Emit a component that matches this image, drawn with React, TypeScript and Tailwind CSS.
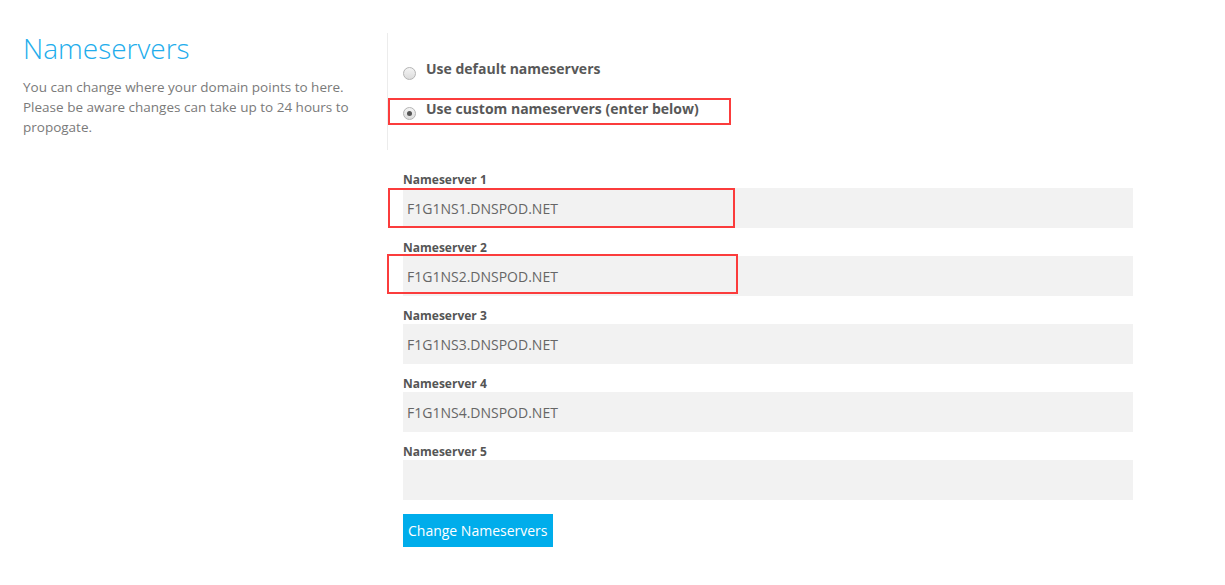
const servers = [
  'F1G1NS1.DNSPOD.NET',
  'F1G1NS2.DNSPOD.NET',
  'F1G1NS3.DNSPOD.NET',
  'F1G1NS4.DNSPOD.NET',
  '',
];

const Radio = ({ checked }: { checked?: boolean }) => (
  <span className="mt-[8px] flex h-[13px] w-[13px] shrink-0 items-center justify-center rounded-full border border-[#b4b4b4] bg-gradient-to-b from-[#f4f4f4] to-[#dcdcdc]">
    {checked && <span className="h-[5px] w-[5px] rounded-full bg-[#555]" />}
  </span>
);

const Highlight = ({ className }: { className: string }) => (
  <span className={`pointer-events-none absolute border-2 border-[#fb3c3c] ${className}`} />
);

export default function App() {
  return (
    <div className="h-[585px] w-[1225px] bg-white pl-[23px] pt-[33px] font-['Open_Sans',sans-serif]">
      <div className="flex">
        <div className="w-[364px]">
          <h1 className="text-[28px] font-light leading-[30px] text-[#22adec]">Nameservers</h1>
          <p className="mt-[14px] w-[340px] text-[13.5px] leading-[20px] text-[#7a7a7a]">
            You can change where your domain points to here. Please be aware changes can take up to 24 hours to propogate.
          </p>
        </div>
        <div className="h-[117px] border-l border-[#ececec] pl-[15px] pt-[26px]">
          <label className="flex gap-[10px]">
            <Radio />
            <span className="text-[14px] font-bold leading-[20px] text-[#585858]">Use default nameservers</span>
          </label>
          <label className="relative mt-[19px] flex gap-[10px]">
            <Highlight className="-left-[15px] -top-[1px] h-[27px] w-[343px]" />
            <Radio checked />
            <span className="text-[14px] font-bold leading-[20px] text-[#585858]">Use custom nameservers (enter below)</span>
          </label>
        </div>
      </div>

      <form className="ml-[380px] mt-[21px] w-[730px]">
        {servers.map((s, i) => (
          <div key={i} className="mb-[11px]">
            <label className="block text-[12px] font-bold leading-[17px] text-[#555]">Nameserver {i + 1}</label>
            <div className="relative">
              {i === 0 && <Highlight className="-left-[15px] top-0 h-[40px] w-[347px]" />}
              {i === 1 && <Highlight className="-left-[16px] -top-[2px] h-[40px] w-[351px]" />}
              <input
                type="text"
                readOnly
                defaultValue={s}
                className="block h-[40px] w-full border-0 bg-[#f2f2f2] pl-[4px] text-[14px] text-[#666] outline-none"
              />
            </div>
          </div>
        ))}
        <button
          type="button"
          className="mt-[3px] h-[33px] bg-[#00adeb] px-[5px] text-[14px] leading-[33px] text-white"
        >
          Change Nameservers
        </button>
      </form>
    </div>
  );
}
